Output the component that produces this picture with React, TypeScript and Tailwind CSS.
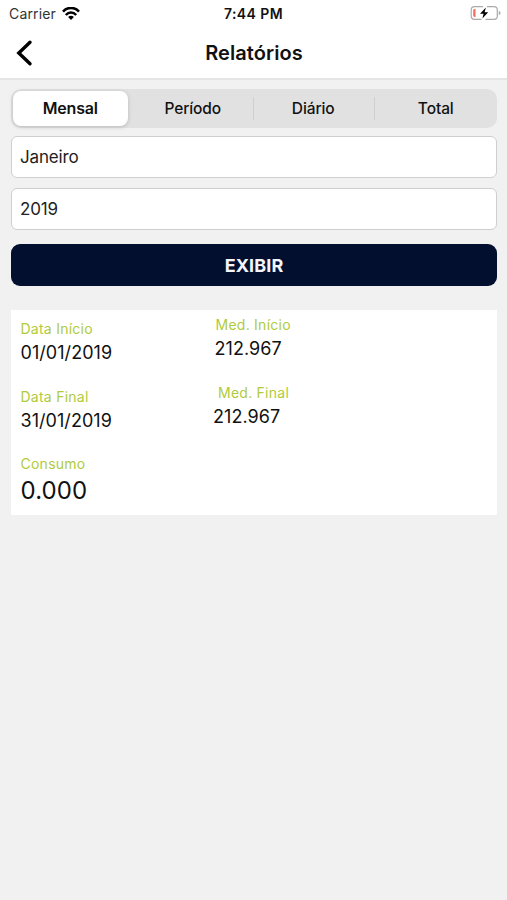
import { useState } from "react";

const TABS = ["Mensal", "Período", "Diário", "Total"];

function StatusBar() {
  return (
    <div className="h-[27px] grid grid-cols-3 items-center pl-[9px] pr-[6px] text-[14px] leading-[27px]">
      <div className="flex items-center gap-[6px] text-[#333]">
        <span className="tracking-[0.15px]">Carrier</span>
        <svg width="18" height="14" viewBox="0 0 18 14" fill="none" aria-hidden="true">
          <path d="M1 4.6C5.5 -0.3 12.5 -0.3 17 4.6" stroke="#000" strokeWidth="2.6" />
          <path d="M3.8 8C6.8 4.7 11.2 4.7 14.2 8" stroke="#000" strokeWidth="2.5" />
          <path d="M9 13L6.1 10C7.8 8.4 10.2 8.4 11.9 10Z" fill="#000" />
        </svg>
      </div>
      <span className="-ml-[3px] text-center font-semibold tracking-[0.4px]">7:44 PM</span>
      <svg className="justify-self-end -mt-px" width="31" height="16" viewBox="0 0 31 16" fill="none" aria-hidden="true">
        <path
          d="M13 1.7H4.5Q1.2 1.7 1.2 5V11Q1.2 14.3 4.5 14.3H11.5M17 1.7H24Q27.3 1.7 27.3 5V11Q27.3 14.3 24 14.3H15.5"
          stroke="#aaa"
          strokeWidth="1.2"
        />
        <path d="M28.8 5.8Q30.6 6.6 30.6 8T28.8 10.2Z" fill="#aaa" />
        <path d="M5.5 4V12H4.6Q3.2 12 3.2 10.6V5.4Q3.2 4 4.6 4Z" fill="#f2705f" />
        <path d="M15.9 2.6L10 8.8H13.6L12.4 13.4L18.2 7.2H14.6Z" fill="#000" />
      </svg>
    </div>
  );
}

function Header() {
  return (
    <header className="bg-white border-b-2 border-[#e5e5e5] h-[80px]">
      <StatusBar />
      <div className="h-[51px] grid grid-cols-3 items-center px-[16px]">
        <button aria-label="Voltar">
          <svg width="18" height="28" viewBox="0 0 18 28" fill="none" aria-hidden="true">
            <path d="M14 3.2L2.8 14L14 24.8" stroke="#000" strokeWidth="3.4" strokeLinecap="round" strokeLinejoin="miter" />
          </svg>
        </button>
        <h1 className="pl-px text-center text-[20px] font-semibold leading-6 tracking-[0.05px]">Relatórios</h1>
      </div>
    </header>
  );
}

function Segments() {
  const [active, setActive] = useState(0);

  return (
    <div className="h-[39px] flex items-center rounded-[10px] bg-[#e1e1e1] p-[2px]">
      {TABS.map((tab, i) => (
        <div key={tab} className="flex-1 h-full flex items-center">
          <button
            onClick={() => setActive(i)}
            className={
              i === active
                ? "flex-1 h-full mr-[6px] pb-px rounded-[8px] bg-white text-[16px] font-semibold tracking-[-0.2px] shadow-[0_1px_4px_rgba(0,0,0,0.18)]"
                : "flex-1 h-full pt-px pr-px text-[15.5px] font-medium tracking-[-0.1px] last:pl-[3px]"
            }
          >
            {tab}
          </button>
          {i !== active && i < TABS.length - 1 && <span className="w-px h-[23px] bg-[#cfcfcf]" />}
        </div>
      ))}
    </div>
  );
}

function Field({ value }: { value: string }) {
  return (
    <div className="h-[42px] flex items-center rounded-[6px] border border-[#cfcfcf] bg-white px-[8px] pt-px text-[17px] tracking-[-0.15px] text-[#222]">
      {value}
    </div>
  );
}

interface ItemProps {
  label: string;
  value: string;
  className?: string;
  labelClass?: string;
  valueClass?: string;
}

function Item({ label, value, className = "", labelClass = "", valueClass = "pt-px text-[18px] leading-6 tracking-[0.05px]" }: ItemProps) {
  return (
    <div className={className}>
      <div className={`text-[14px] leading-[22px] tracking-[0.25px] text-[#b0cb3c] ${labelClass}`}>{label}</div>
      <div className={valueClass}>{value}</div>
    </div>
  );
}

export default function App() {
  return (
    <div className="w-full h-[900px] bg-[#f1f1f1] text-[#111] font-['Inter','Liberation_Sans',sans-serif]">
      <Header />
      <main className="pl-[11px] pr-[10px] pt-[9px]">
        <Segments />
        <div className="mt-[8px] flex flex-col gap-[10px]">
          <Field value="Janeiro" />
          <Field value="2019" />
        </div>
        <button className="mt-[14px] w-full h-[42px] rounded-[9px] bg-[#020f2f] text-[18px] font-bold tracking-[0.1px] text-[#f3f5fa]">
          EXIBIR
        </button>

        <section className="mt-[24px] h-[205px] bg-white pl-[9.5px] pt-[8px]">
          <div className="h-[68px] flex items-start">
            <Item className="w-[194px]" label="Data Início" value="01/01/2019" />
            <Item className="-mt-[4px]" labelClass="pl-px" label="Med. Início" value="212.967" />
          </div>
          <div className="h-[67px] flex items-start">
            <Item className="w-[192.5px]" label="Data Final" value="31/01/2019" />
            <Item className="-mt-[4px]" labelClass="pl-[5px]" label="Med. Final" value="212.967" />
          </div>
          <Item label="Consumo" value="0.000" valueClass="text-[24px] leading-8 tracking-[0.1px]" />
        </section>
      </main>
    </div>
  );
}
